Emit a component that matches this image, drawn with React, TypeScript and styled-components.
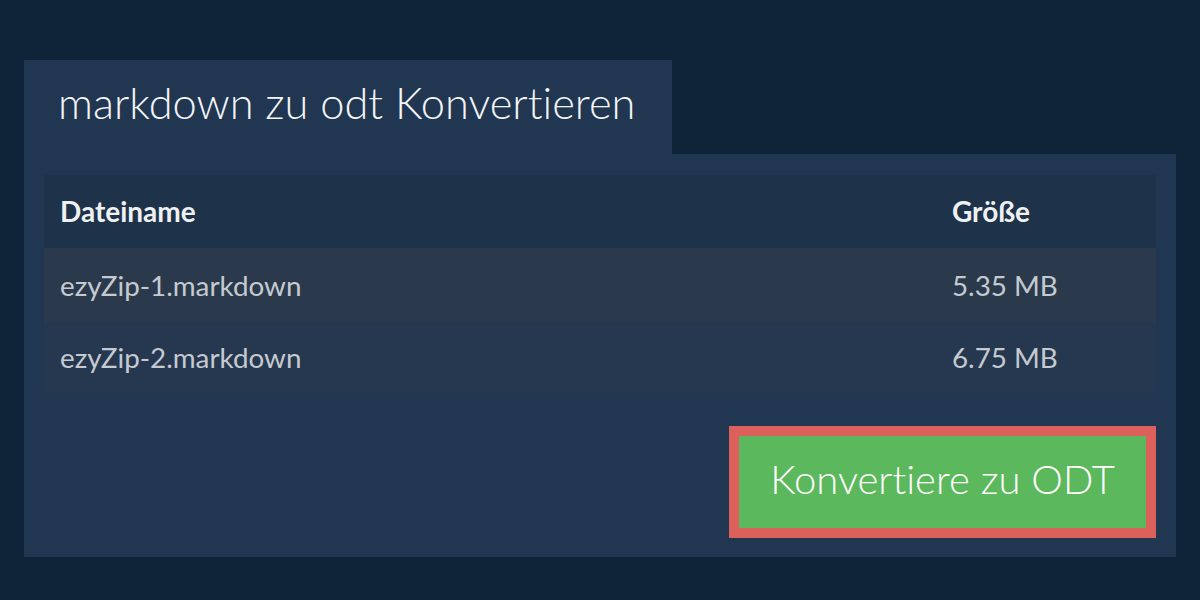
import React from "react";
import styled, { createGlobalStyle } from "styled-components";

const Global = createGlobalStyle`
  html, body { margin: 0; padding: 0; background: #0f2339; }
  body { font-family: Lato, "Open Sans", sans-serif; font-variant-ligatures: none; }
`;

const Page = styled.div`
  width: 1200px;
  height: 600px;
  box-sizing: border-box;
  padding: 60px 24px 0 24px;
  background: #0f2339;
  display: flex;
  flex-direction: column;
`;

const Tab = styled.div`
  width: 648px;
  height: 94px;
  box-sizing: border-box;
  background: #213651;
  padding-left: 34px;
  display: flex;
  align-items: center;
`;

const Title = styled.h1`
  margin: 0;
  font-family: Lato, sans-serif;
  font-weight: 300;
  font-size: 43.4px;
  color: #f2f4f6;
  padding-bottom: 10px;
  font-variant-ligatures: none;
`;

const Body = styled.div`
  background: #213651;
  padding: 21px 20px 19px 20px;
  display: flex;
  flex-direction: column;
`;

const Table = styled.div`
  display: flex;
  flex-direction: column;
`;

const Row = styled.div<{ $bg: string; $h: number }>`
  display: grid;
  grid-template-columns: 1fr 204px;
  align-items: center;
  height: ${(p) => p.$h}px;
  background: ${(p) => p.$bg};
  padding-left: 16px;
`;

const HeadCell = styled.div`
  font-family: Lato, sans-serif;
  font-weight: 700;
  font-size: 28px;
  color: #eef0f2;
  padding-bottom: 2px;
`;

const Cell = styled.div`
  font-family: Lato, sans-serif;
  font-weight: 400;
  font-size: 27.8px;
  color: #c5cad1;
`;

const Actions = styled.div`
  display: flex;
  justify-content: flex-end;
  margin-top: 33px;
`;

const Button = styled.button`
  width: 427px;
  height: 112px;
  box-sizing: border-box;
  border: 10px solid #dc605c;
  background: #5cb85c;
  color: #ffffff;
  font-family: Lato, sans-serif;
  font-weight: 300;
  font-size: 40px;
  padding: 0 0 6px 0;
  cursor: pointer;
  font-variant-ligatures: none;
`;

const files = [
  { name: "ezyZip-1.markdown", size: "5.35 MB", bg: "#2a3a4c", h: 74 },
  { name: "ezyZip-2.markdown", size: "6.75 MB", bg: "#25384f", h: 71 },
];

export default function App() {
  return (
    <>
      <Global />
      <Page>
        <Tab>
          <Title>markdown zu odt Konvertieren</Title>
        </Tab>
        <Body>
          <Table>
            <Row $bg="#1e3249" $h={73}>
              <HeadCell>Dateiname</HeadCell>
              <HeadCell>Größe</HeadCell>
            </Row>
            {files.map((f) => (
              <Row key={f.name} $bg={f.bg} $h={f.h}>
                <Cell>{f.name}</Cell>
                <Cell>{f.size}</Cell>
              </Row>
            ))}
          </Table>
          <Actions>
            <Button>Konvertiere zu ODT</Button>
          </Actions>
        </Body>
      </Page>
    </>
  );
}
